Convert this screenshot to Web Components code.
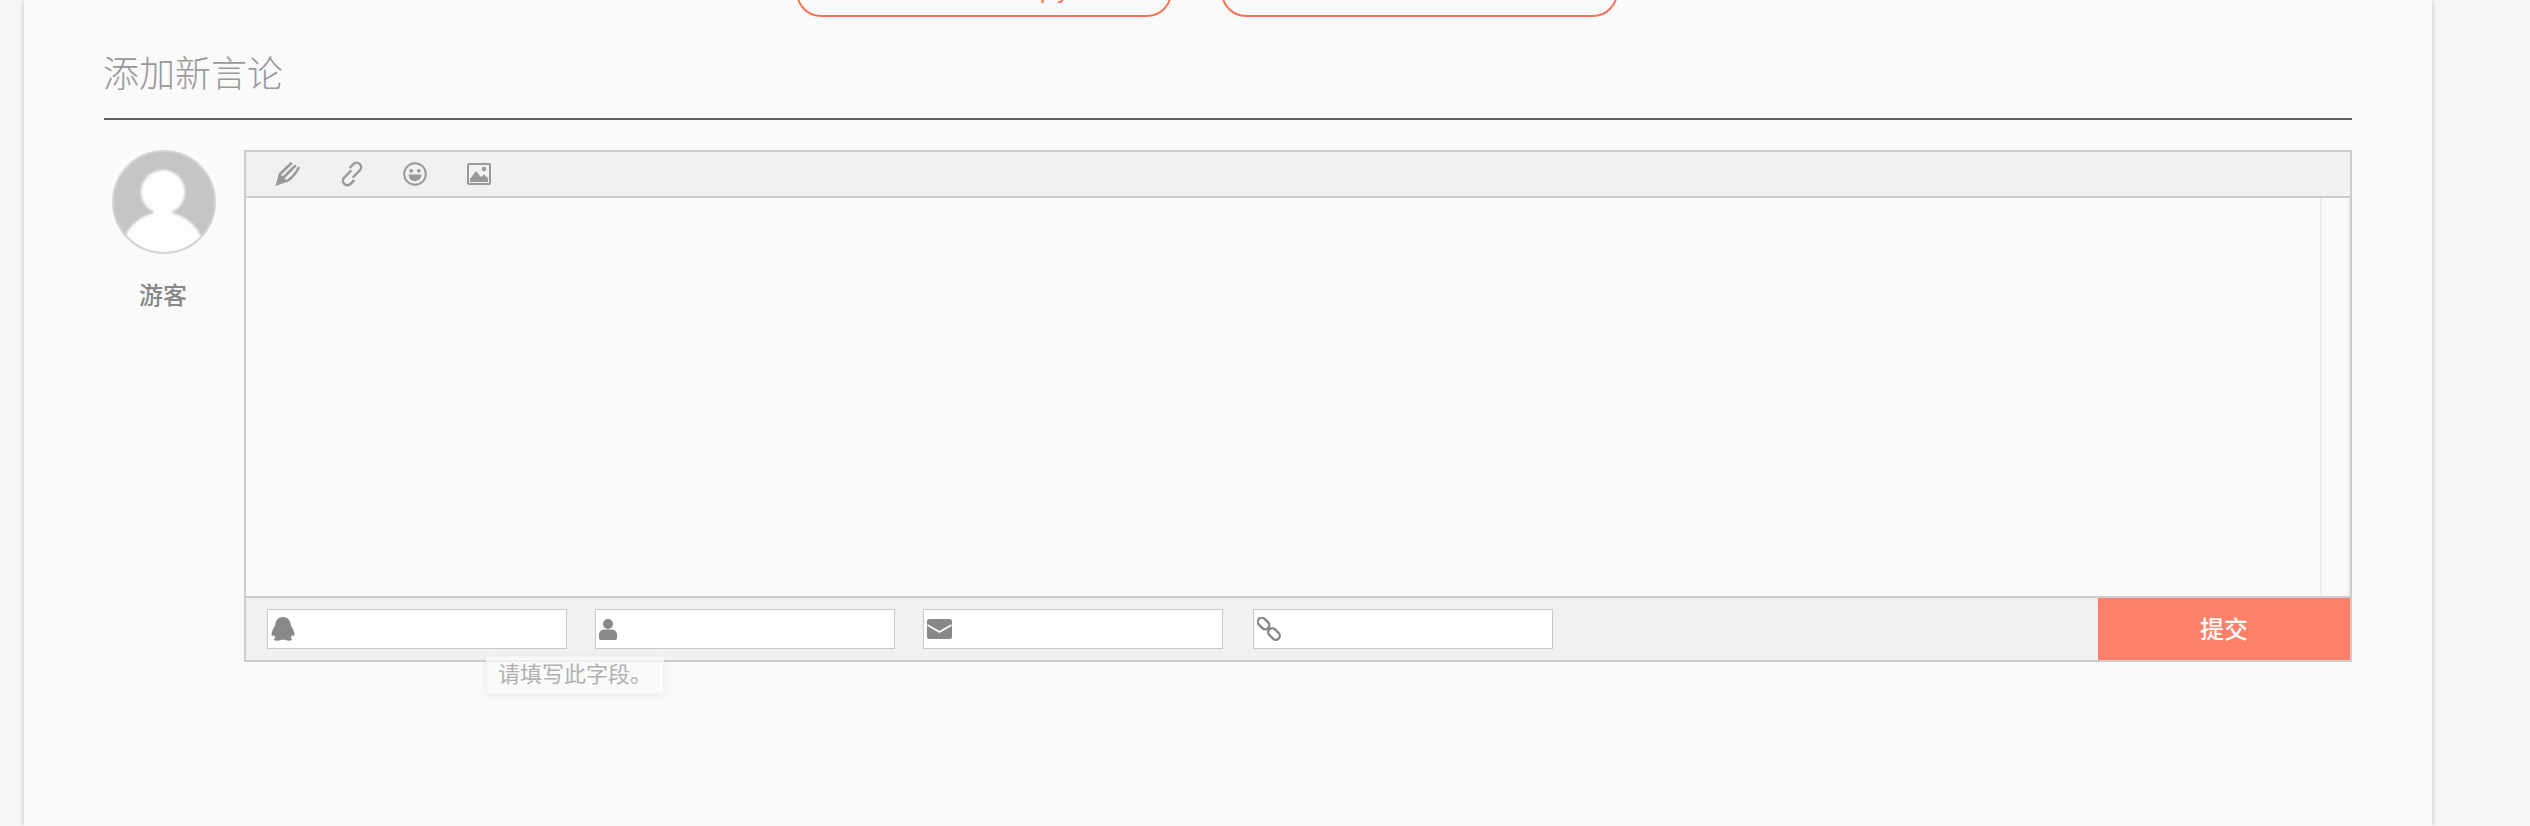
<!DOCTYPE html>
<html lang="zh">
<head>
<meta charset="utf-8">
<title>添加新言论</title>
<style>
    html, body {
        margin: 0;
        height: 826px;
        overflow: hidden;
        background: #f7f7f7;
        font-family: "Noto Sans CJK SC", "Noto Sans", sans-serif;
    }
</style>
</head>
<body>

<page-card>
    <pill-row>
        <pill-button style="width: 376px; letter-spacing: 3px">上一篇：Copy</pill-button>
        <pill-button style="width: 397px; letter-spacing: 1px">下一篇：多说评论框的样式</pill-button>
    </pill-row>
    <section-title>添加新言论</section-title>
    <comment-form></comment-form>
</page-card>

<script>
const ICON_GREY = "#999";
const FIELD_GREY = "#888";

const toolIcons = {
    pen: `<svg width="25" height="24" viewBox="0 0 25 24" fill="none" stroke="${ICON_GREY}" stroke-width="2.6" stroke-linecap="round">
            <path d="M0.5 24 L4 11 L13 19.5 Z" fill="${ICON_GREY}" stroke="none"/>
            <path d="M5 12 L16 1.5 M8.5 15.5 L20 4 M12 19 C17 16 21 11 23.5 6"/>
          </svg>`,
    link: `<svg width="24" height="24" viewBox="0 0 24 24" fill="none" stroke="${ICON_GREY}" stroke-width="2.4" stroke-linecap="round" style="overflow: visible">
            <g transform="rotate(-45 12 12)">
                <path d="M8.5 18 H4 a4.5 4.5 0 0 1 0 -9 H13"/>
                <path d="M15.5 6 H20 a4.5 4.5 0 0 1 0 9 H11"/>
            </g>
          </svg>`,
    smile: `<svg width="24" height="24" viewBox="0 0 24 24">
            <circle cx="12" cy="12" r="10.8" fill="none" stroke="${ICON_GREY}" stroke-width="2"/>
            <circle cx="8.2" cy="8.8" r="1.9" fill="${ICON_GREY}"/>
            <circle cx="15.8" cy="8.8" r="1.9" fill="${ICON_GREY}"/>
            <path d="M5.5 12.5 H18.5 C18 17 15.5 19 12 19 C8.5 19 6 17 5.5 12.5 Z" fill="${ICON_GREY}"/>
          </svg>`,
    image: `<svg width="24" height="22" viewBox="0 0 24 22">
            <rect x="1" y="1" width="22" height="20" rx="1" fill="none" stroke="${ICON_GREY}" stroke-width="2"/>
            <circle cx="17" cy="6" r="2.2" fill="${ICON_GREY}"/>
            <path d="M3 19 V16 L9 8 L14 14 L17 11.5 L21 15 V19 Z" fill="${ICON_GREY}"/>
          </svg>`
};

const fieldIcons = {
    qq: `<svg width="24" height="24" viewBox="0 0 24 24" fill="${FIELD_GREY}">
            <path d="M12 0 C17 0 19.5 3.5 19.8 8.5 C21.5 11 23.5 14.5 23.5 17.5 C23.5 19 22.5 19.5 21 18 C20.8 19.2 20.2 20.2 19.4 21 C21 21.6 21.5 22.4 20.8 23 C19.6 24 15.5 24 14 22.8 H10 C8.5 24 4.4 24 3.2 23 C2.5 22.4 3 21.6 4.6 21 C3.8 20.2 3.2 19.2 3 18 C1.5 19.5 0.5 19 0.5 17.5 C0.5 14.5 2.5 11 4.2 8.5 C4.5 3.5 7 0 12 0 Z"/>
          </svg>`,
    user: `<svg width="18" height="21" viewBox="0 0 18 21" fill="${FIELD_GREY}">
            <circle cx="9" cy="5" r="5"/>
            <path d="M0 15.5 C0 12 3 10.5 5.5 10.5 H12.5 C15 10.5 18 12 18 15.5 V19 C18 20.2 17 21 16 21 H2 C1 21 0 20.2 0 19 Z"/>
          </svg>`,
    mail: `<svg width="25" height="20" viewBox="0 0 25 20">
            <rect x="0" y="0" width="25" height="20" rx="2.5" fill="${FIELD_GREY}"/>
            <path d="M0.5 6 L12.5 13 L24.5 6" fill="none" stroke="#fff" stroke-width="1.6"/>
          </svg>`,
    chain: `<svg width="24" height="24" viewBox="0 0 24 24" fill="none" stroke="${FIELD_GREY}" stroke-width="2.4">
            <rect x="0" y="2.5" width="13" height="8" rx="4" transform="rotate(45 6.5 6.5)"/>
            <rect x="10.5" y="13" width="13" height="8" rx="4" transform="rotate(45 17 17)"/>
          </svg>`
};

function defineSimple(name, html) {
    const template = document.createElement("template");
    template.innerHTML = html;
    customElements.define(name, class extends HTMLElement {
        constructor() {
            super();
            this.attachShadow({mode: "open"});
            this.shadowRoot.appendChild(template.content.cloneNode(true));
        }
    });
}

defineSimple("page-card", `<style>
    :host {
        display: flow-root;
        box-sizing: border-box;
        width: 2408px;
        height: 826px;
        margin-left: 24px;
        padding: 0 80px;
        background: #fafafa;
        box-shadow: 0 0 6px rgba(0, 0, 0, 0.22);
    }
</style><slot></slot>`);

/* the row is scrolled mostly out of the window, only the pill bottoms show */
defineSimple("pill-row", `<style>
    :host {
        display: flex;
        gap: 49px;
        margin-top: -33px;
        padding-left: 692px;
    }
</style><slot></slot>`);

defineSimple("pill-button", `<style>
    :host {
        display: block;
        box-sizing: border-box;
        height: 50px;
        padding-top: 6px;
        border: 2px solid #ff7058;
        border-radius: 26px;
        color: #ff7058;
        font-size: 24px;
        line-height: 24px;
        text-align: center;
        white-space: nowrap;
        overflow: hidden;
    }
</style><slot></slot>`);

defineSimple("section-title", `<style>
    :host {
        display: block;
        margin-top: 30px;
        padding-bottom: 23px;
        border-bottom: 2px solid #606060;
        color: #999;
        font-size: 36px;
        font-weight: 200;
        line-height: 48px;
        text-indent: -1px;
    }
</style><slot></slot>`);

defineSimple("user-avatar", `<style>
    :host {
        display: flex;
        flex-direction: column;
        align-items: center;
        width: 120px;
        flex-shrink: 0;
    }
    svg { display: block; }
    .name {
        margin-top: 24px;
        margin-right: 2px;
        color: #888;
        font-size: 24px;
        font-weight: 500;
        line-height: 32px;
    }
</style>
<svg width="104" height="104" viewBox="0 0 104 104">
    <defs>
        <clipPath id="disc"><circle cx="52" cy="52" r="50"/></clipPath>
        <filter id="soft"><feGaussianBlur stdDeviation="0.9"/></filter>
    </defs>
    <circle cx="52" cy="52" r="51" fill="#c5c5c5" stroke="#d4d4d4" stroke-width="2"/>
    <g clip-path="url(#disc)" fill="#fdfdfd" filter="url(#soft)">
        <circle cx="51" cy="42" r="22"/>
        <ellipse cx="51" cy="104" rx="42" ry="42"/>
        <rect x="42" y="55" width="18" height="14"/>
    </g>
</svg>
<div class="name">游客</div>`);

defineSimple("tool-bar", `<style>
    :host {
        display: flex;
        align-items: center;
        gap: 39.67px;
        height: 44px;
        padding-left: 29px;
        border-bottom: 2px solid #ccc;
        background: #f1f1f1;
    }
    ::slotted(span) { display: block; line-height: 0; }
</style><slot></slot>`);

class FieldInput extends HTMLElement {
    constructor() {
        super();
        this.attachShadow({mode: "open"});
        this.shadowRoot.innerHTML = `<style>
            :host {
                display: block;
                position: relative;
                width: 300px;
                height: 40px;
            }
            input {
                display: block;
                box-sizing: border-box;
                width: 100%;
                height: 100%;
                padding: 0 0 0 36px;
                border: 1.5px solid #c8c8c8;
                border-radius: 0;
                background: #fff;
                outline: none;
            }
            /* icon sits over the input */
            .icon {
                position: absolute;
                top: 0;
                bottom: 0;
                left: 4px;
                display: flex;
                align-items: center;
                line-height: 0;
            }
        </style>
        <input type="text">
        <span class="icon">${fieldIcons[this.getAttribute("icon")]}</span>`;
    }
}
customElements.define("field-input", FieldInput);

defineSimple("field-tooltip", `<style>
    :host {
        position: absolute;
        left: 382px;
        top: 506px;
        box-sizing: border-box;
        width: 178px;
        height: 38px;
        padding: 0 11px;
        color: #b0b0b0;
        font-size: 22px;
        line-height: 31px;
        white-space: nowrap;
        background: rgba(250, 250, 250, 0.75);
        border: 1px solid #f2f2f2;
        box-shadow: 0 2px 8px rgba(0, 0, 0, 0.06);
    }
</style><slot></slot>`);

class CommentForm extends HTMLElement {
    constructor() {
        super();
        this.attachShadow({mode: "open"});
        this.shadowRoot.innerHTML = `<style>
            :host {
                display: flex;
                position: relative;
                gap: 20px;
                margin-top: 30px;
            }
            .editor {
                flex: 1;
                display: flex;
                flex-direction: column;
                box-sizing: border-box;
                height: 512px;
                border: 2px solid #ccc;
            }
            .body {
                flex: 1;
                display: flex;
                min-height: 0;
            }
            textarea {
                flex: 1;
                display: block;
                padding: 0;
                border: 0;
                outline: none;
                resize: none;
                background: transparent;
            }
            .track {
                box-sizing: border-box;
                width: 30px;
                border-left: 2px solid #eee;
                border-right: 2px solid #eee;
            }
            .bottom {
                display: flex;
                align-items: center;
                gap: 28px;
                height: 62px;
                padding-left: 21px;
                border-top: 2px solid #ccc;
                background: #f1f1f1;
            }
            field-input:last-of-type { margin-left: 2px; }
            button {
                align-self: stretch;
                width: 252px;
                margin-left: auto;
                padding: 0 0 3px;
                border: 0;
                background: #ff8068;
                color: #fff;
                font: inherit;
                font-size: 24px;
                font-weight: 500;
            }
        </style>
        <user-avatar></user-avatar>
        <div class="editor">
            <tool-bar>
                <span>${toolIcons.pen}</span>
                <span>${toolIcons.link}</span>
                <span>${toolIcons.smile}</span>
                <span>${toolIcons.image}</span>
            </tool-bar>
            <div class="body">
                <textarea></textarea>
                <div class="track"></div>
            </div>
            <div class="bottom">
                <field-input icon="qq"></field-input>
                <field-input icon="user"></field-input>
                <field-input icon="mail"></field-input>
                <field-input icon="chain"></field-input>
                <button type="button">提交</button>
            </div>
        </div>
        <field-tooltip>请填写此字段。</field-tooltip>`;
    }
}
customElements.define("comment-form", CommentForm);
</script>
</body>
</html>
